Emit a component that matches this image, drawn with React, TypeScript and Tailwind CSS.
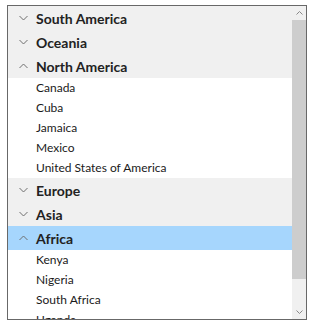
import React from "react";

type Group = { name: string; open: boolean; selected?: boolean; items: string[] };

const groups: Group[] = [
    { name: "South America", open: false, items: [] },
    { name: "Oceania", open: false, items: [] },
    { name: "North America", open: true, items: ["Canada", "Cuba", "Jamaica", "Mexico", "United States of America"] },
    { name: "Europe", open: false, items: [] },
    { name: "Asia", open: false, items: [] },
    { name: "Africa", open: true, selected: true, items: ["Kenya", "Nigeria", "South Africa", "Uganda"] },
];

const Chevron = ({ up }: { up: boolean }) => (
    <svg width="9" height="6" viewBox="0 0 9 6" className="shrink-0">
        <path
            d={up ? "M0.5 5 L4.5 1 L8.5 5" : "M0.5 1 L4.5 5 L8.5 1"}
            fill="none"
            stroke="#6e6e6e"
            strokeWidth="1"
        />
    </svg>
);

const App = () => {
    return (
        <div className="w-[314px] h-[332px] bg-white pl-[7px] pt-[5px] font-['Lato',sans-serif]">
            <div className="w-[300px] h-[315px] border border-[#686868] flex overflow-hidden">
                {/* list */}
                <div className="flex-1 overflow-hidden">
                    {groups.map((g) => (
                        <div key={g.name}>
                            <div
                                className={`h-[24px] flex items-center gap-[8px] pl-[11px] ${g.selected ? "bg-[#a6d6fd]" : "bg-[#f0f0f0]"}`}
                            >
                                <Chevron up={g.open} />
                                <span className="text-[14px] font-bold text-[#222]">{g.name}</span>
                            </div>
                            {g.open &&
                                g.items.map((it) => (
                                    <div key={it} className="h-[20px] flex items-center pl-[28px] text-[12px] text-[#1a1a1a]">
                                        {it}
                                    </div>
                                ))}
                        </div>
                    ))}
                </div>

                {/* scrollbar */}
                <div className="w-[14px] bg-[#f0f0f0] flex flex-col">
                    <div className="h-[14px] flex items-center justify-center">
                        <svg width="7" height="4" viewBox="0 0 7 4">
                            <path d="M0.5 3.5 L3.5 0.5 L6.5 3.5" fill="none" stroke="#888" strokeWidth="1" />
                        </svg>
                    </div>
                    <div className="h-[259px] bg-[#cdcdcd]" />
                    <div className="flex-1" />
                    <div className="h-[14px] flex items-center justify-center">
                        <svg width="7" height="4" viewBox="0 0 7 4">
                            <path d="M0.5 0.5 L3.5 3.5 L6.5 0.5" fill="none" stroke="#888" strokeWidth="1" />
                        </svg>
                    </div>
                </div>
            </div>
        </div>
    );
};

export default App;
